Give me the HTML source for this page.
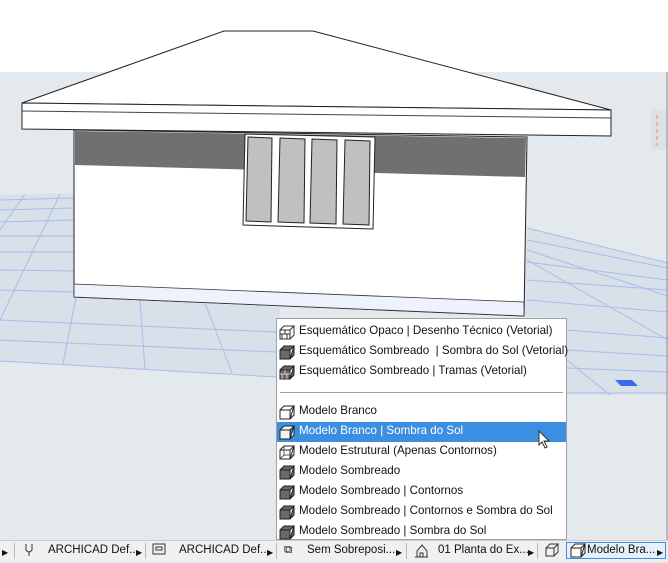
<!DOCTYPE html>
<html><head><meta charset="utf-8"><style>
body{margin:0;width:668px;height:560px;overflow:hidden;position:relative;background:#e4e9ed;font-family:"Liberation Sans",Tahoma,sans-serif;}
#menu{position:absolute;left:276px;top:318px;width:291px;height:222px;background:#fff;border:1px solid #a0a0a0;box-sizing:border-box;}
.it{position:absolute;left:0;height:20px;width:289px;font-size:11.6px;line-height:20px;color:#111;white-space:nowrap;}
.it span{position:absolute;left:22px;top:-1px;}
.ic{position:absolute;left:2px;top:3px;width:16px;height:15px;}
.hl{background:#3c8fe0;color:#fff;}
#bar{position:absolute;left:0;top:540px;width:668px;height:20px;background:#f0f0f0;border-top:1px solid #ccc;font-size:11.5px;color:#111;}
.sb{position:absolute;top:2px;line-height:15px;white-space:nowrap;}
.sep{position:absolute;top:2px;width:1px;height:16px;background:#bbb;}
</style></head><body>
<svg width="668" height="540" style="position:absolute;left:0;top:0">
<rect x="0" y="0" width="668" height="72" fill="#fff"/>
<rect x="0" y="72" width="668" height="468" fill="#e4e9ed"/>
<polygon points="0,195 74,193 74,297 280,307 280,377 0,361" fill="#d8e0ea"/>
<polygon points="527,228 668,263 668,395 567,395 567,318 524,316" fill="#d8e0ea"/>
<g stroke="#a8bde8" stroke-width="1" fill="none">
<line x1="0" y1="200" x2="74" y2="198"/><line x1="0" y1="210" x2="74" y2="208"/><line x1="0" y1="222" x2="74" y2="220"/><line x1="0" y1="236" x2="74" y2="236"/><line x1="0" y1="252" x2="74" y2="252"/><line x1="0" y1="270" x2="74" y2="271"/><line x1="0" y1="290" x2="74" y2="292"/>
<line x1="0" y1="320" x2="276" y2="332"/><line x1="0" y1="340" x2="276" y2="352"/><line x1="0" y1="361" x2="276" y2="377"/>
<line x1="60" y1="194" x2="0" y2="320"/><line x1="25" y1="194" x2="0" y2="230"/>
<line x1="76" y1="297" x2="63" y2="364"/><line x1="140" y1="300" x2="145" y2="370"/><line x1="205" y1="303" x2="232" y2="373"/>
<line x1="527" y1="228" x2="668" y2="263"/><line x1="527" y1="240" x2="668" y2="268"/><line x1="527" y1="250" x2="668" y2="296"/><line x1="527" y1="262" x2="668" y2="280"/><line x1="527" y1="280" x2="668" y2="290"/><line x1="527" y1="300" x2="668" y2="312"/><line x1="567" y1="330" x2="668" y2="338"/><line x1="567" y1="350" x2="668" y2="356"/><line x1="567" y1="368" x2="668" y2="372"/><line x1="567" y1="393" x2="668" y2="393"/>
<line x1="527" y1="260" x2="668" y2="340"/><line x1="567" y1="360" x2="610" y2="395"/>
</g>
<polygon points="224,31 313,31 611,110 22,103" fill="#fff" stroke="#222" stroke-width="1"/>
<polygon points="22,103 611,110 611,136 22,129" fill="#fff" stroke="#222" stroke-width="1"/>
<line x1="22" y1="111" x2="611" y2="118" stroke="#444"/>
<polygon points="74,130 527,137 524,316 74,297" fill="#fff" stroke="#222" stroke-width="1"/>
<polygon points="75,131 526,138 525,177 75,165" fill="#707070"/>
<polygon points="74,284 524,302 524,316 74,297" fill="#eef2fc" stroke="#333" stroke-width="0.8"/>
<polygon points="245,134 375,137 373,229 243,225" fill="#fff" stroke="#222"/>
<g fill="#c0c0c0" stroke="#222" stroke-width="1">
<polygon points="248,137 272,138 271,222 246,221"/>
<polygon points="280,138 305,139 304,223 278,222"/>
<polygon points="312,139 337,140 336,224 310,223"/>
<polygon points="345,140 370,141 369,225 343,224"/>
</g>
<rect x="651" y="110" width="17" height="40" rx="3" fill="#dde1e5"/>
<line x1="657" y1="115" x2="657" y2="146" stroke="#e8953a" stroke-dasharray="4,3"/>
<line x1="667" y1="72" x2="667" y2="540" stroke="#8a9099"/>
<polygon points="615,380 632,380 638,386 621,386" fill="#3a6ae8"/>
</svg>
<div id="menu">
<div class="it" style="top:3px"><svg class="ic" viewBox="0 0 16 15"><path d="M1 5h10v9H1zM1 5l4-4h10l-4 4M11 14l4-4V1M1 9h10M6 5v4M3 9v5M8 9v5" fill="#fff" stroke="#333"/></svg><span>Esquemático Opaco | Desenho Técnico (Vetorial)</span></div>
<div class="it" style="top:23px"><svg class="ic" viewBox="0 0 16 15"><path d="M1 5h10v9H1zM1 5l4-4h10l-4 4M11 14l4-4V1z" fill="#6a6a6a" stroke="#222"/></svg><span>Esquemático Sombreado &nbsp;| Sombra do Sol (Vetorial)</span></div>
<div class="it" style="top:43px"><svg class="ic" viewBox="0 0 16 15"><path d="M1 5h10v9H1zM1 5l4-4h10l-4 4M11 14l4-4V1z" fill="#6a6a6a" stroke="#222"/><path d="M1 9h10M6 5v4M3 9v5M8 9v5" stroke="#ccc"/></svg><span>Esquemático Sombreado | Tramas (Vetorial)</span></div>
<div style="position:absolute;left:3px;right:3px;top:73px;height:1px;background:#a0a0a0"></div>
<div class="it" style="top:83px"><svg class="ic" viewBox="0 0 16 15"><path d="M1 5h10v9H1zM1 5l4-4h10l-4 4M11 14l4-4V1z" fill="#fff" stroke="#222"/></svg><span>Modelo Branco</span></div>
<div class="it hl" style="top:103px"><svg class="ic" viewBox="0 0 16 15"><path d="M1 5h10v9H1zM1 5l4-4h10l-4 4M11 14l4-4V1z" fill="#f4f4f4" stroke="#222"/></svg><span>Modelo Branco | Sombra do Sol</span></div>
<div class="it" style="top:123px"><svg class="ic" viewBox="0 0 16 15"><path d="M1 5h10v9H1zM1 5l4-4h10l-4 4M11 14l4-4V1z" fill="#fff" stroke="#222"/><path d="M5 1v9h10M5 10l-4 4" fill="none" stroke="#555"/></svg><span>Modelo Estrutural (Apenas Contornos)</span></div>
<div class="it" style="top:143px"><svg class="ic" viewBox="0 0 16 15"><path d="M1 5h10v9H1zM1 5l4-4h10l-4 4M11 14l4-4V1z" fill="#6a6a6a" stroke="#222"/></svg><span>Modelo Sombreado</span></div>
<div class="it" style="top:163px"><svg class="ic" viewBox="0 0 16 15"><path d="M1 5h10v9H1zM1 5l4-4h10l-4 4M11 14l4-4V1z" fill="#6a6a6a" stroke="#222"/></svg><span>Modelo Sombreado | Contornos</span></div>
<div class="it" style="top:183px"><svg class="ic" viewBox="0 0 16 15"><path d="M1 5h10v9H1zM1 5l4-4h10l-4 4M11 14l4-4V1z" fill="#6a6a6a" stroke="#222"/></svg><span>Modelo Sombreado | Contornos e Sombra do Sol</span></div>
<div class="it" style="top:203px"><svg class="ic" viewBox="0 0 16 15"><path d="M1 5h10v9H1zM1 5l4-4h10l-4 4M11 14l4-4V1z" fill="#6a6a6a" stroke="#222"/></svg><span>Modelo Sombreado | Sombra do Sol</span></div>
<svg style="position:absolute;left:261px;top:111px" width="14" height="20" viewBox="0 0 14 20"><path d="M1 1v14l3-3 3 6 2-1-3-6h5z" fill="#fff" stroke="#333"/></svg>
</div>
<div id="bar">
<span class="sb" style="left:2px;font-size:8px;top:4px">▶</span><div class="sep" style="left:14px"></div>
<span class="sb" style="left:24px"><svg width="10" height="14"><path d="M2 1v6q3 4 6 0V1M5 9v4" fill="none" stroke="#333"/></svg></span><span class="sb" style="left:48px">ARCHICAD Def...</span><span class="sb" style="left:136px;font-size:8px;top:4px">▶</span><div class="sep" style="left:145px"></div>
<span class="sb" style="left:152px"><svg width="14" height="13"><rect x="1" y="1" width="12" height="10" fill="none" stroke="#333"/><rect x="4" y="4" width="6" height="3" fill="none" stroke="#333"/></svg></span><span class="sb" style="left:179px">ARCHICAD Def...</span><span class="sb" style="left:267px;font-size:8px;top:4px">▶</span><div class="sep" style="left:276px"></div>
<span class="sb" style="left:284px">⧉</span><span class="sb" style="left:307px">Sem Sobreposi...</span><span class="sb" style="left:396px;font-size:8px;top:4px">▶</span><div class="sep" style="left:406px"></div>
<span class="sb" style="left:414px"><svg width="16" height="15"><path d="M1 14h13M3 14V8l5-6 5 6v6M6 14v-4h3v4" fill="none" stroke="#333"/></svg></span><span class="sb" style="left:438px">01 Planta do Ex...</span><span class="sb" style="left:528px;font-size:8px;top:4px">▶</span><div class="sep" style="left:537px"></div>
<span class="sb" style="left:545px"><svg width="14" height="14"><path d="M1 5h8v8H1zM1 5l4-4h8l-4 4M9 13l4-4V1" fill="none" stroke="#333"/></svg></span>
<div style="position:absolute;left:566px;top:1px;width:100px;height:17px;border:1px solid #3c8fe0;background:#e6f0fb;box-sizing:border-box"></div>
<span class="sb" style="left:570px"><svg width="16" height="15" viewBox="0 0 16 15"><path d="M1 5h10v9H1zM1 5l4-4h10l-4 4M11 14l4-4V1z" fill="#fff" stroke="#222"/></svg></span><span class="sb" style="left:587px">Modelo Bra...</span><span class="sb" style="left:657px;font-size:8px;top:4px">▶</span>
</div>
</body></html>
